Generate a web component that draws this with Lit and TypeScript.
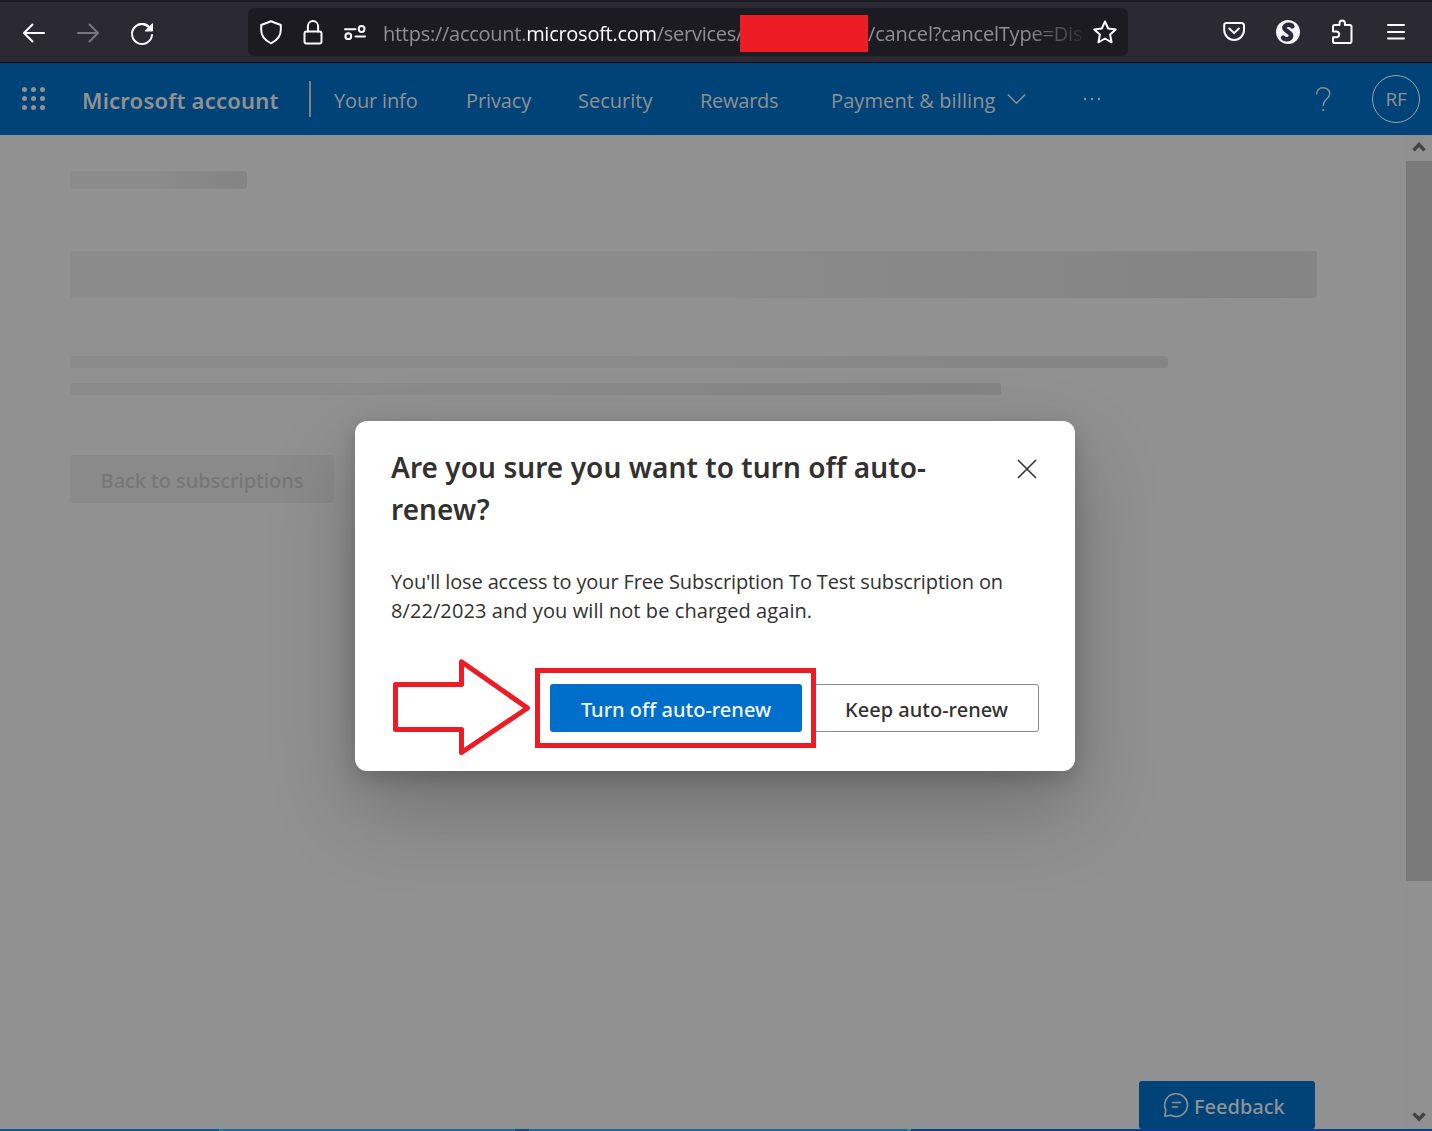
import { LitElement, html, css, svg } from "lit";
import { customElement } from "lit/decorators.js";

@customElement("browser-toolbar")
class BrowserToolbar extends LitElement {
  static styles = css`
    :host { display: block; }
    .bar {
      box-sizing: border-box; height: 63px; display: flex; align-items: center;
      background: #2b2a33; border-top: 2px solid #1c1b22; border-bottom: 1px solid #0e0e11;
      padding: 0 20px 0 20px; color: #fbfbfe;
    }
    svg { display: block; fill: none; stroke: currentColor; stroke-width: 2; stroke-linecap: round; stroke-linejoin: round; flex: none; }
    .nav { display: flex; gap: 26px; width: 228px; margin-top: 2px; }
    .off { color: #78777e; }
    .url {
      box-sizing: border-box; width: 880px; height: 48px; margin-bottom: 1px; display: flex; align-items: center;
      background: #1c1b22; border-radius: 6px; padding: 0 9px; flex: none;
    }
    .ids { display: flex; gap: 14px; width: 126px; flex: none; }
    .text {
      display: flex; width: 700px; height: 37px; margin-top: 3px; white-space: pre; flex: none;
      font: 400 20px/37px "Open Sans", sans-serif; letter-spacing: -0.27px; color: #8f8f96;
      -webkit-mask-image: linear-gradient(to right, #000 640px, transparent 710px);
      mask-image: linear-gradient(to right, #000 640px, transparent 710px);
    }
    .head { width: 357px; flex: none; }
    .host { color: #fbfbfe; }
    .redacted { width: 128px; flex: none; background: #ed1c24; }
    .tail { letter-spacing: -0.2px; flex: none; }
    .star { margin-left: 8px; }
    .tools { display: flex; gap: 26px; margin-left: auto; margin-right: 2px; width: 190px; }
    .s { fill: #f4f4f6; stroke: none; }
    .sline { stroke: #2b2a3c; stroke-width: 4.6; }
    .solid { fill: currentColor; }
  `;
  render() {
    return html`<div class="bar">
      <div class="nav">
        <svg width="28" height="28" viewBox="0 0 28 28"><path d="M24 14H4.5M12.5 5.5L4 14l8.500 8.500" /></svg>
        <svg class="off" width="28" height="28" viewBox="0 0 28 28"><path d="M4 14h19.500M15.500 5.500L24 14l-8.500 8.500" /></svg>
        <svg width="28" height="28" viewBox="0 0 28 28"><path d="M22.800 10.200A10 10 0 1 0 24 16" /><path d="M10 5.600A10 10 0 0 1 20.500 8" /><path class="solid" stroke-width="1" d="M24.500 5v7h-7z" /></svg>
      </div>
      <div class="url">
        <div class="ids">
          <svg width="28" height="28" viewBox="0 0 28 28"><path d="M14 3.200L23.800 7v5c0 5.600-4.200 10.600-9.800 13.300C8.400 22.600 4.200 17.600 4.200 12V7z" /></svg>
          <svg width="28" height="28" viewBox="0 0 28 28"><rect x="5.500" y="13.500" width="17" height="12" rx="2" /><path d="M8.900 13.500V8.200a5.100 5.100 0 0 1 10.200 0v5.300" /></svg>
          <svg width="28" height="28" viewBox="0 0 28 28"><path d="M4 11.200h10.500M14.500 18.500H24" /><circle cx="20.600" cy="11" r="2.900" /><circle cx="7.300" cy="18.200" r="2.900" /></svg>
        </div>
        <div class="text"><span class="head">https://account.<span class="host">microsoft.com</span>/services/</span><span class="redacted"></span><span class="tail">/cancel?cancelType=Dis</span></div>
        <svg class="star" width="28" height="28" viewBox="0 0 28 28"><path d="M14 3.500l3.200 7 7.500.9-5.600 5.200 1.500 7.700-6.600-3.800-6.600 3.800 1.500-7.700-5.600-5.200 7.500-.9z" /></svg>
      </div>
      <div class="tools">
        <svg width="28" height="28" viewBox="0 0 28 28"><path d="M6.500 5h15.200a2.300 2.300 0 0 1 2.300 2.300V12a9.900 9.900 0 0 1-19.800 0V7.300A2.300 2.300 0 0 1 6.500 5zM9.300 10.500l4.800 4.600 4.800-4.600" /></svg>
        <svg width="28" height="28" viewBox="0 0 28 28"><circle class="s" cx="14" cy="14" r="12" /><path class="sline" d="M18.300 8.300c-1.200-2.200-6.300-2.300-7.800.8-1.400 3.700 7 4.600 6.600 8.800-.6 3.800-6 4.300-8 1.800" /></svg>
        <svg width="28" height="28" viewBox="0 0 28 28"><path d="M5 10.600V8.800C5 7.800 5.700 7 6.800 7h4.700V5.300a2.700 2.700 0 0 1 5.400 0V7h4.800c1 0 1.800.8 1.800 1.800v14.400c0 1-.8 1.800-1.800 1.800H6.800C5.700 25 5 24.200 5 23.200v-4h3.300a2.900 2.900 0 0 0 0-5.800H5z" /></svg>
        <svg width="28" height="28" viewBox="0 0 28 28"><path d="M6 7h16M6 14h16M6 20.600h16" /></svg>
      </div>
    </div>`;
  }
}

@customElement("account-header")
class AccountHeader extends LitElement {
  static styles = css`
    :host { display: block; }
    .bar {
      box-sizing: border-box; height: 72px; display: flex; align-items: center; background: #004378; color: #919191;
      font: 400 20px/30px "Open Sans", sans-serif; white-space: nowrap; padding-right: 12px;
    }
    .waffle { display: block; width: 24px; height: 24px; margin: 0 36px 0 22px; fill: currentColor; flex: none; }
    .brand { width: 227px; padding-top: 2px; font: 600 22px/30px "Noto Sans", sans-serif; letter-spacing: 0.2px; }
    .rule { width: 2px; height: 36px; background: #857f7b; margin-right: 23px; }
    .link { padding-top: 4px; flex: none; }
    .info { width: 132px; letter-spacing: -0.15px; }
    .privacy { width: 112px; letter-spacing: -0.1px; }
    .security { width: 122px; }
    .rewards { width: 131px; letter-spacing: -0.25px; }
    .billing { width: 176px; letter-spacing: 0.1px; }
    .line { display: block; fill: none; stroke: currentColor; stroke-width: 1.4; flex: none; }
    .dots { display: block; fill: currentColor; margin-left: 57px; flex: none; }
    .help { margin-left: auto; margin-right: 40px; }
    .avatar {
      box-sizing: border-box; width: 48px; height: 48px; border: 1px solid #a0a0a0; border-radius: 50%; text-align: center;
      font-size: 19px; line-height: 47px; letter-spacing: -0.3px; flex: none;
    }
  `;
  render() {
    const dots = [0, 1, 2].flatMap((r) => [0, 1, 2].map((c) => svg`<circle cx=${2.5 + c * 9} cy=${2.5 + r * 9} r="2.500" />`));
    return html`<div class="bar">
      <svg class="waffle" viewBox="0 0 24 24">${dots}</svg>
      <span class="brand">Microsoft account</span>
      <span class="rule"></span>
      <span class="link info">Your info</span>
      <span class="link privacy">Privacy</span>
      <span class="link security">Security</span>
      <span class="link rewards">Rewards</span>
      <span class="link billing">Payment &amp; billing</span>
      <svg class="line" width="19" height="12" viewBox="0 0 19 12"><path d="M.8 1.500l8.700 8.700 8.700-8.700" /></svg>
      <svg class="dots" width="18" height="4" viewBox="0 0 18 4"><circle cx="2" cy="2" r="1.200" /><circle cx="9" cy="2" r="1.200" /><circle cx="16" cy="2" r="1.200" /></svg>
      <svg class="line help" width="18" height="26" viewBox="0 0 18 26"><path d="M2.500 8.500C2.500 4 5.500 1.800 9 1.800s6.800 2.200 6.800 5.900c0 5.300-6.500 5.500-6.500 11.300v1" /><path stroke-width="1.800" d="M9.300 23v2" /></svg>
      <span class="avatar">RF</span>
    </div>`;
  }
}

@customElement("confirm-dialog")
class ConfirmDialog extends LitElement {
  static styles = css`
    :host { display: block; }
    .card {
      position: relative; box-sizing: border-box; width: 720px; height: 350px; background: #fff; border-radius: 12px;
      padding: 25px 36px 0; color: #323130;
      box-shadow: 0 38px 86px rgba(0, 0, 0, 0.22), 0 7px 22px rgba(0, 0, 0, 0.18);
    }
    .top { display: flex; justify-content: space-between; }
    h1 { margin: 0; width: 560px; font: 600 28px/42px "Noto Sans", sans-serif; letter-spacing: 0.07px; }
    .close { display: block; margin: 13px 2px 0 0; fill: none; stroke: #323130; stroke-width: 1.600; }
    p { margin: 37px 0 0; font: 400 20px/29px "Open Sans", sans-serif; white-space: nowrap; }
    .first { letter-spacing: -0.13px; }
    .second { letter-spacing: 0.08px; }
    .actions { display: flex; justify-content: flex-end; gap: 12px; margin-top: 59px; }
    button {
      box-sizing: border-box; height: 48px; padding: 3px 0 0; margin: 0; border-radius: 3px; text-align: center; white-space: nowrap;
      font: 500 20px/30px "Noto Sans", sans-serif; letter-spacing: 0;
    }
    .primary { width: 252px; border: 0; background: #006fcc; color: #f3f7fb; }
    .secondary { width: 225px; border: 1px solid #8a8886; background: #fff; color: #323130; }
    .frame { position: absolute; left: 180px; top: 247px; box-sizing: border-box; width: 281px; height: 80px; border: 5px solid #ed1c24; }
    .arrow { position: absolute; left: 35px; top: 234px; fill: none; stroke: #ed1c24; stroke-width: 5; stroke-linejoin: round; }
  `;
  render() {
    return html`<div class="card" role="dialog">
      <div class="top">
        <h1>Are you sure you want to turn off auto-<br />renew?</h1>
        <svg class="close" width="20" height="20" viewBox="0 0 20 20"><path d="M1 1l18 18M19 1L1 19" /></svg>
      </div>
      <p><span class="first">You'll lose access to your Free Subscription To Test subscription on</span><br /><span class="second">8/22/2023 and you will not be charged again.</span></p>
      <div class="actions">
        <button class="primary">Turn off auto-renew</button>
        <button class="secondary">Keep auto-renew</button>
      </div>
      <div class="frame"></div>
      <svg class="arrow" width="144" height="104" viewBox="0 0 144 104"><path d="M5.500 29.500h66V6.800L137.500 53 71.500 97.500V74.500h-66z" /></svg>
    </div>`;
  }
}

@customElement("app-root")
class AppRoot extends LitElement {
  static styles = css`
    :host { display: block; }
    .window { position: relative; width: 1432px; height: 1131px; overflow: hidden; display: flex; flex-direction: column; background: #919191; }
    .body { flex: 1; display: flex; min-height: 0; }
    .page { flex: 1; display: flex; flex-direction: column; padding: 36px 0 0 70px; }
    .bone { border-radius: 3px; flex: none; background: linear-gradient(to right, #8b8b8b 50%, #848484 95%, #858585); }
    .crumb { width: 177px; height: 18px; }
    .hero { width: 1247px; height: 47px; margin-top: 62px; }
    .line1 { width: 1098px; height: 12px; margin-top: 58px; }
    .line2 { width: 931px; height: 12px; margin-top: 15px; }
    .back {
      box-sizing: border-box; width: 264px; height: 48px; margin-top: 60px; padding-top: 3px; background: #8a8a8a; color: #777;
      font: 500 20px/46px "Noto Sans", sans-serif; letter-spacing: -0.05px; text-align: center; border-radius: 3px;
    }
    .feedback {
      box-sizing: border-box; width: 176px; height: 48px; margin: auto 0 0 1069px; padding: 0 0 0 24px; display: flex; align-items: center; gap: 5px;
      background: #004378; color: #929292; border-radius: 3px; font: 500 20px/30px "Noto Sans", sans-serif;
    }
    .feedback span { padding-top: 3px; }
    .feedback svg { fill: none; stroke: currentColor; stroke-width: 1.600; stroke-linecap: round; stroke-linejoin: round; }
    .scroll { width: 26px; background: #909090; display: flex; flex-direction: column; }
    .scroll svg { display: block; flex: none; fill: none; stroke: #434343; stroke-width: 3.400; }
    .thumb { height: 720px; background: #7a7a7a; }
    .down { margin-top: auto; }
    .edge { height: 2px; flex: none; background: linear-gradient(to right, #0a5796 0 219px, #217fa0 219px 223px, #17689f 223px 515px, #0a4f8c 515px 529px, #17689f 529px 907px, #2a8fa0 907px 911px, #0a3d91 911px); }
    .modal { position: absolute; left: 355px; top: 421px; }
  `;
  render() {
    return html`<div class="window">
      <browser-toolbar></browser-toolbar>
      <account-header></account-header>
      <div class="body">
        <div class="page">
          <div class="bone crumb"></div>
          <div class="bone hero"></div>
          <div class="bone line1"></div>
          <div class="bone line2"></div>
          <div class="back">Back to subscriptions</div>
          <div class="feedback">
            <svg width="26" height="26" viewBox="0 0 26 26"><path d="M1.800 24.200l1-6.200A11.400 11.400 0 1 1 8 23.300zM9.500 10.500h8M9.500 15h5" /></svg>
            <span>Feedback</span>
          </div>
        </div>
        <div class="scroll">
          <svg width="26" height="26" viewBox="0 0 26 26"><path d="M7.500 15.300L13 9.500l5.500 5.800" /></svg>
          <div class="thumb"></div>
          <svg class="down" width="26" height="26" viewBox="0 0 26 26"><path d="M7.500 10.500L13 16l5.500-5.500" /></svg>
        </div>
      </div>
      <div class="edge"></div>
      <confirm-dialog class="modal"></confirm-dialog>
    </div>`;
  }
}
